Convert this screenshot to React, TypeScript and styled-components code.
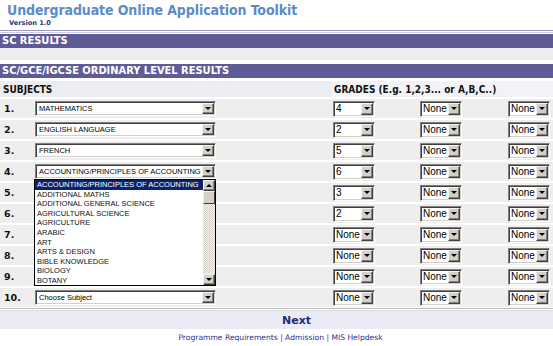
import React from "react";
import styled, { createGlobalStyle } from "styled-components";

const GlobalStyle = createGlobalStyle`
  html, body {
    margin: 0;
    padding: 0;
    background: #ffffff;
  }
  body {
    width: 553px;
    height: 346px;
    overflow: hidden;
    font-family: "DejaVu Sans", Verdana, sans-serif;
  }
`;

const Page = styled.div`
  width: 553px;
  display: flex;
  flex-direction: column;
`;

const Header = styled.header`
  height: 30px;
  padding: 2px 0 0 7px;
  box-sizing: border-box;
`;

const Title = styled.h1`
  margin: 0;
  font: bold 14px/17px "DejaVu Sans Condensed", "DejaVu Sans", sans-serif;
  letter-spacing: -0.1px;
  color: #5b8cc8;
`;

const Version = styled.div`
  font: bold 6.6px/8px "DejaVu Sans", sans-serif;
  color: #1f3a78;
  padding-left: 2px;
`;

const Rule = styled.div`
  height: 1px;
  border-top: 1px solid #9c9ac2;
  border-bottom: 1px solid #cfcee0;
  margin-bottom: 1px;
`;

const Bar = styled.div`
  height: 14px;
  padding-left: 2px;
  background: #5f5b97;
  color: #ffffff;
  font: bold 11px/14px "DejaVu Sans Condensed", "DejaVu Sans", sans-serif;
`;

const Band = styled.div`
  height: 12px;
  margin-bottom: 4px;
  background: #ededed;
`;

const Table = styled.div`
  display: flex;
  flex-direction: column;
  gap: 2px;
  margin-top: 3px;
`;

const Row = styled.div<{ $head?: boolean }>`
  display: grid;
  grid-template-columns: 33px 298px 87px 88px 47px;
  height: ${(p) => (p.$head ? "16px" : "19px")};
  background: ${(p) => (p.$head ? "#ececf3" : "#eeeeee")};
  align-items: center;
`;

const HeadCell = styled.div<{ $span?: number; $light?: boolean }>`
  grid-column: span ${(p) => p.$span ?? 1};
  height: 100%;
  display: flex;
  align-items: center;
  padding-left: 3px;
  background: ${(p) => (p.$light ? "#f3f3f7" : "transparent")};
  font: bold 10px "DejaVu Sans Condensed", "DejaVu Sans", sans-serif;
  color: #111111;
  white-space: nowrap;
`;

const Num = styled.div`
  padding-left: 4px;
  font: bold 9.5px "DejaVu Sans", sans-serif;
  color: #111111;
`;

const Cell = styled.div`
  position: relative;
  padding-left: 2px;
  display: flex;
  align-items: center;
`;

const SelectBox = styled.div<{ $w: number; $h: number }>`
  position: relative;
  width: ${(p) => p.$w}px;
  height: ${(p) => p.$h}px;
  box-sizing: border-box;
  background: #ffffff;
  border-top: 1px solid #808080;
  border-left: 1px solid #808080;
  border-right: 1px solid #ffffff;
  border-bottom: 1px solid #ffffff;
  box-shadow: inset 1px 1px 0 #404040, inset -1px -1px 0 #d4d0c8;
  display: flex;
  align-items: center;
`;

const SelectText = styled.span<{ $small?: boolean }>`
  flex: 1;
  padding-left: ${(p) => (p.$small ? "3px" : "2px")};
  font-family: "Liberation Sans", Arial, sans-serif;
  font-size: ${(p) => (p.$small ? "7.5px" : "10px")};
  color: #000000;
  white-space: nowrap;
  overflow: hidden;
`;

const ArrowButton = styled.span<{ $h: number }>`
  width: 12px;
  height: ${(p) => p.$h}px;
  margin-right: 1px;
  box-sizing: border-box;
  background: #d4d0c8;
  border-top: 1px solid #f4f3ef;
  border-left: 1px solid #f4f3ef;
  border-right: 1px solid #404040;
  border-bottom: 1px solid #404040;
  box-shadow: inset -1px -1px 0 #808080;
  display: flex;
  align-items: center;
  justify-content: center;
  &::after {
    content: "";
    border-left: 3px solid transparent;
    border-right: 3px solid transparent;
    border-top: 3px solid #000000;
  }
`;

const UpArrow = styled(ArrowButton)`
  &::after {
    border-top: none;
    border-bottom: 3px solid #000000;
  }
`;

const List = styled.div`
  position: absolute;
  top: 15px;
  left: 1px;
  width: 182px;
  height: 107px;
  box-sizing: border-box;
  border: 1px solid #000000;
  background: #ffffff;
  display: flex;
  z-index: 2;
`;

const Items = styled.div`
  flex: 1;
  display: flex;
  flex-direction: column;
  overflow: hidden;
`;

const Item = styled.div<{ $active?: boolean }>`
  height: 9.6px;
  padding-left: 2px;
  font: 7.5px/9.6px "Liberation Sans", Arial, sans-serif;
  white-space: nowrap;
  background: ${(p) => (p.$active ? "#0a246a" : "transparent")};
  color: ${(p) => (p.$active ? "#ffffff" : "#111111")};
`;

const ScrollBar = styled.div`
  width: 12px;
  display: flex;
  flex-direction: column;
  background: repeating-conic-gradient(#d4d0c8 0 25%, #f4f3ef 0 50%) 0 0 / 2px 2px;
`;

const Thumb = styled.div`
  height: 13px;
  box-sizing: border-box;
  background: #d4d0c8;
  border-top: 1px solid #f4f3ef;
  border-left: 1px solid #f4f3ef;
  border-right: 1px solid #404040;
  border-bottom: 1px solid #404040;
`;

const Track = styled.div`
  flex: 1;
`;

const Divider = styled.div`
  height: 1px;
  margin-top: 1px;
  border-top: 1px solid #b9b9b9;
  border-bottom: 1px solid #dcdcdc;
`;

const NextBand = styled.div`
  height: 18px;
  background: #eaeaf4;
  display: flex;
  align-items: center;
  justify-content: center;
  padding-left: 40px;
  font: bold 11px "DejaVu Sans", sans-serif;
  color: #1f2a7a;
`;

const Footer = styled.div`
  margin-top: 4px;
  text-align: center;
  padding-left: 8px;
  font: 7.6px "DejaVu Sans", sans-serif;
  color: #2d2d8c;
`;

const subjectList = [
  "ACCOUNTING/PRINCIPLES OF ACCOUNTING",
  "ADDITIONAL MATHS",
  "ADDITIONAL GENERAL SCIENCE",
  "AGRICULTURAL SCIENCE",
  "AGRICULTURE",
  "ARABIC",
  "ART",
  "ARTS & DESIGN",
  "BIBLE KNOWLEDGE",
  "BIOLOGY",
  "BOTANY",
];

// rows 5-9 sit under the open list, so their subject text is not shown
const rows = [
  { subject: "MATHEMATICS", grade: "4" },
  { subject: "ENGLISH LANGUAGE", grade: "2" },
  { subject: "FRENCH", grade: "5" },
  { subject: "ACCOUNTING/PRINCIPLES OF ACCOUNTING", grade: "6", open: true },
  { subject: "", grade: "3" },
  { subject: "", grade: "2" },
  { subject: "", grade: "None" },
  { subject: "", grade: "None" },
  { subject: "", grade: "None" },
  { subject: "Choose Subject", grade: "None" },
];

const SubjectSelect = ({ value }: { value: string }) => (
  <SelectBox $w={181} $h={15}>
    <SelectText $small>{value}</SelectText>
    <ArrowButton $h={11} />
  </SelectBox>
);

const GradeSelect = ({ value }: { value: string }) => (
  <SelectBox $w={42} $h={16}>
    <SelectText>{value}</SelectText>
    <ArrowButton $h={12} />
  </SelectBox>
);

const Dropdown = () => (
  <List>
    <Items>
      {subjectList.map((s, i) => (
        <Item key={s} $active={i === 0}>
          {s}
        </Item>
      ))}
    </Items>
    <ScrollBar>
      <UpArrow $h={11} />
      <Thumb />
      <Track />
      <ArrowButton $h={11} />
    </ScrollBar>
  </List>
);

export default function App() {
  return (
    <Page>
      <GlobalStyle />
      <Header>
        <Title>Undergraduate Online Application Toolkit</Title>
        <Version>Version 1.0</Version>
      </Header>
      <Rule />
      <Bar>SC RESULTS</Bar>
      <Band />
      <Bar>SC/GCE/IGCSE ORDINARY LEVEL RESULTS</Bar>
      <Table>
        <Row $head>
          <HeadCell $span={2}>SUBJECTS</HeadCell>
          <HeadCell $span={3} $light>
            GRADES (E.g. 1,2,3... or A,B,C..)
          </HeadCell>
        </Row>
        {rows.map((r, i) => (
          <Row key={i}>
            <Num>{i + 1}.</Num>
            <Cell>
              <SubjectSelect value={r.subject} />
              {r.open && <Dropdown />}
            </Cell>
            <Cell>
              <GradeSelect value={r.grade} />
            </Cell>
            <Cell>
              <GradeSelect value="None" />
            </Cell>
            <Cell>
              <GradeSelect value="None" />
            </Cell>
          </Row>
        ))}
      </Table>
      <Divider />
      <NextBand>Next</NextBand>
      <Footer>Programme Requirements | Admission | MIS Helpdesk</Footer>
    </Page>
  );
}
